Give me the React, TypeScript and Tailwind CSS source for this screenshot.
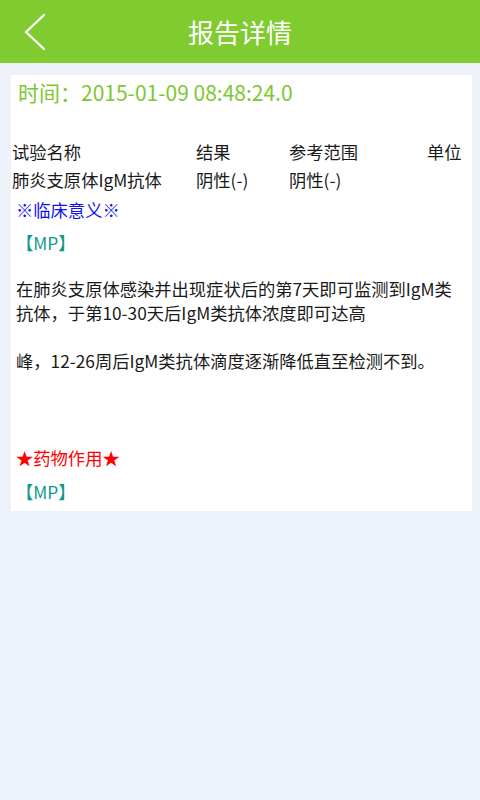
import React from "react";

export default function App() {
  const font = { fontFamily: '"Noto Sans CJK SC", "Noto Sans", sans-serif' };
  return (
    <div className="w-[480px] h-[800px] bg-[#edf1f9] flex flex-col" style={font}>
      <div className="h-[63px] bg-[#80cb2f] relative flex items-center justify-center shrink-0">
        <svg className="absolute left-[22px] top-[13px]" width="26" height="38" viewBox="0 0 26 38" fill="none">
          <path d="M22 2 L4 19 L22 36" stroke="white" strokeWidth="2.4" strokeLinecap="round" strokeLinejoin="round" />
        </svg>
        <span className="text-white text-[26px] leading-none">报告详情</span>
      </div>
      <div className="mt-[12px] ml-[11px] mr-[8px] bg-white flex flex-col pb-[7px]">
        <div className="mt-[3px] pl-[7px] text-[21px] leading-[28px] text-[#7cc732]">时间：2015-01-09 08:48:24.0</div>
        <div className="mt-[32px] pl-[1px] grid grid-cols-[184px_93px_138px_1fr] text-[17.3px] leading-[28px] text-[#1a1a1a]">
          <div>试验名称</div>
          <div>结果</div>
          <div>参考范围</div>
          <div>单位</div>
          <div className="whitespace-nowrap">肺炎支原体IgM抗体</div>
          <div>阴性(-)</div>
          <div>阴性(-)</div>
          <div></div>
        </div>
        <div className="mt-[4px] pl-[5px] text-[17.3px] leading-[24px] text-[#1010f0]">※临床意义※</div>
        <div className="mt-[9px] pl-[5px] text-[17.3px] leading-[24px] text-[#0f9a8e]">【MP】</div>
        <div className="mt-[22px] pl-[5px] pr-[8px] text-[17.3px] leading-[24px] text-[#1a1a1a]">
          在肺炎支原体感染并出现症状后的第7天即可监测到IgM类抗体，于第10-30天后IgM类抗体浓度即可达高
        </div>
        <div className="mt-[24px] pl-[5px] text-[17.3px] leading-[24px] text-[#1a1a1a]">
          峰，12-26周后IgM类抗体滴度逐渐降低直至检测不到。
        </div>
        <div className="mt-[73px] pl-[5px] text-[17.3px] leading-[24px] text-[#ff0000]">★药物作用★</div>
        <div className="mt-[10px] pl-[5px] text-[17.3px] leading-[24px] text-[#0f9a8e]">【MP】</div>
      </div>
    </div>
  );
}
